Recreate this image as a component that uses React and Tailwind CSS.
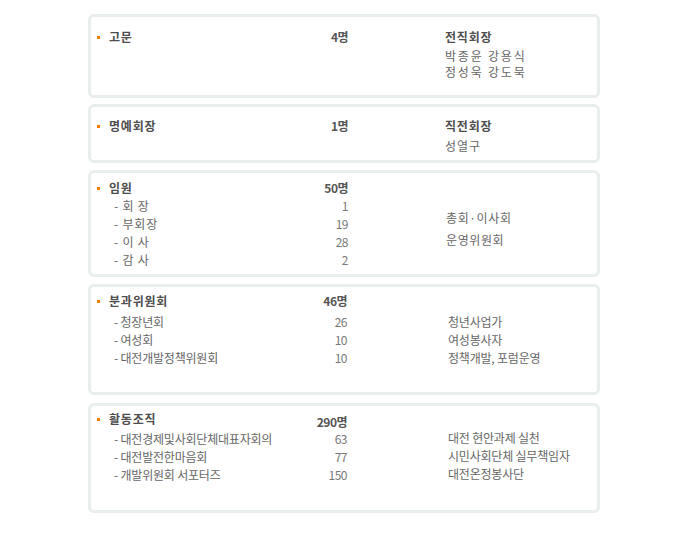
import React from "react";

const font = { fontFamily: '"Noto Sans CJK KR", "Noto Sans", sans-serif' };

function Title({ label, count, countClass = "" }) {
  return (
    <div className="flex items-center h-[18px]">
      <span className="w-[3px] h-[3px] bg-[#f57a00] mr-[9px]" />
      <span className="flex-1 font-bold text-[#4d4d4d] tracking-[0.8px]">{label}</span>
      <span className={`font-bold text-[#555] tracking-[-0.5px] ${countClass}`}>{count}</span>
    </div>
  );
}

function SubRow({ label, num, tight }) {
  return (
    <div className="flex items-center h-[18px] pl-[17px]">
      <span className={`flex-1 text-[#666] ${tight ? "tracking-[-0.2px]" : "tracking-[0.8px]"}`}>
        {label}
      </span>
      <span className="text-[#777] tracking-[-0.5px]">{num}</span>
    </div>
  );
}

export default function App() {
  return (
    <div className="w-[700px] h-[534px] bg-white text-[12px] leading-[18px]" style={font}>
      <div className="flex flex-col pt-[14px] pl-[88px]">
        {/* ===== 고문 ===== */}
        <div className="w-[512px] h-[84px] border-[3px] border-[#e8eded] rounded-[6px] flex">
          <div className="w-[257px] pl-[6px] pt-[11px]">
            <Title label="고문" count="4명" />
          </div>
          <div className="ml-[97px] pt-[11px]">
            <div className="font-bold text-[#4d4d4d] tracking-[0.8px]">전직회장</div>
            <div className="mt-[2px] text-[#666] tracking-[1.8px] leading-[16px]">
              <div>박종윤 강용식</div>
              <div>정성욱 강도묵</div>
            </div>
          </div>
        </div>

        {/* ===== 명예회장 ===== */}
        <div className="mt-[6px] w-[512px] h-[59px] border-[3px] border-[#e8eded] rounded-[6px] flex">
          <div className="w-[257px] pl-[6px] pt-[10px]">
            <Title label="명예회장" count="1명" />
          </div>
          <div className="ml-[97px] pt-[10px]">
            <div className="font-bold text-[#4d4d4d] tracking-[0.8px]">직전회장</div>
            <div className="mt-[2px] text-[#666] tracking-[1px]">성열구</div>
          </div>
        </div>

        {/* ===== 임원 ===== */}
        <div className="mt-[7px] w-[512px] h-[107px] border-[3px] border-[#e8eded] rounded-[6px] flex">
          <div className="w-[257px] pl-[6px] pt-[6px]">
            <Title label="임원" count="50명" />
            <SubRow label="- 회  장" num="1" />
            <SubRow label="- 부회장" num="19" />
            <SubRow label="- 이  사" num="28" />
            <SubRow label="- 감  사" num="2" />
          </div>
          <div className="ml-[98px] pt-[36px] text-[#666] tracking-[0.6px]">
            <div>총회·이사회</div>
            <div className="mt-[4px]">운영위원회</div>
          </div>
        </div>

        {/* ===== 분과위원회 ===== */}
        <div className="mt-[7px] w-[512px] h-[111px] border-[3px] border-[#e8eded] rounded-[6px] flex">
          <div className="w-[256px] pl-[6px] pt-[5px]">
            <Title label="분과위원회" count="46명" />
            <div className="mt-[3px]">
              <SubRow label="- 청장년회" num="26" tight />
              <SubRow label="- 여성회" num="10" tight />
              <SubRow label="- 대전개발정책위원회" num="10" tight />
            </div>
          </div>
          <div className="ml-[101px] pt-[26px] text-[#666] tracking-[-0.2px]">
            <div>청년사업가</div>
            <div>여성봉사자</div>
            <div>정책개발, 포럼운영</div>
          </div>
        </div>

        {/* ===== 활동조직 ===== */}
        <div className="mt-[8px] w-[512px] h-[110px] border-[3px] border-[#e8eded] rounded-[6px] flex">
          <div className="w-[256px] pl-[6px] pt-[4px]">
            <Title label="활동조직" count="290명" countClass="self-end -mb-[3px]" />
            <div className="mt-[2px]">
              <SubRow label="- 대전경제및사회단체대표자회의" num="63" tight />
              <SubRow label="- 대전발전한마음회" num="77" tight />
              <SubRow label="- 개발위원회 서포터즈" num="150" tight />
            </div>
          </div>
          <div className="ml-[101px] pt-[23px] text-[#666] tracking-[-0.2px]">
            <div>대전 현안과제 실천</div>
            <div>시민사회단체 실무책임자</div>
            <div>대전온정봉사단</div>
          </div>
        </div>
      </div>
    </div>
  );
}
